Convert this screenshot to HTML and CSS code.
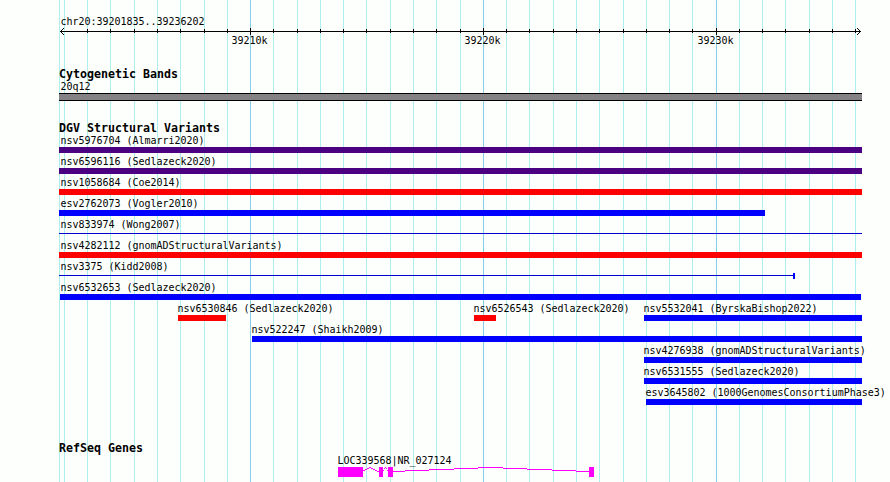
FILE: index.html
```html
<!DOCTYPE html>
<html lang="en">
<head>
<meta charset="utf-8">
<title>chr20:39201835..39236202</title>
<link rel="stylesheet" href="styles.css">
</head>
<body>
<main class="panel">
<svg class="gridlines" width="890" height="482" shape-rendering="crispEdges" aria-hidden="true">
<path class="minor" d="M59.5 0v482M64.5 0v482M87.5 0v482M110.5 0v482M134.5 0v482M157.5 0v482M180.5 0v482M204.5 0v482M227.5 0v482M273.5 0v482M297.5 0v482M320.5 0v482M343.5 0v482M366.5 0v482M390.5 0v482M413.5 0v482M436.5 0v482M460.5 0v482M506.5 0v482M529.5 0v482M553.5 0v482M576.5 0v482M599.5 0v482M623.5 0v482M646.5 0v482M669.5 0v482M692.5 0v482M739.5 0v482M762.5 0v482M785.5 0v482M809.5 0v482M832.5 0v482M855.5 0v482"/>
<path class="major" d="M250.5 0v482M483.5 0v482M716.5 0v482"/>
</svg>
<header class="ruler">
<div class="label region">chr20:39201835..39236202</div>
<svg class="axis" width="803" height="8" shape-rendering="crispEdges" aria-hidden="true">
<path d="M1 3.5h801M28.5 1v4M51.5 1v4M75.5 1v4M98.5 1v4M121.5 1v4M145.5 1v4M168.5 1v4M191.5 0v7M214.5 1v4M238.5 1v4M261.5 1v4M284.5 1v4M307.5 1v4M331.5 1v4M354.5 1v4M377.5 1v4M401.5 1v4M424.5 0v7M447.5 1v4M470.5 1v4M494.5 1v4M517.5 1v4M540.5 1v4M564.5 1v4M587.5 1v4M610.5 1v4M633.5 1v4M657.5 0v7M680.5 1v4M703.5 1v4M726.5 1v4M750.5 1v4M773.5 1v4M796.5 1v4"/>
<path d="M1 3.5h1M2 2.5h1M2 4.5h1M3 1.5h1M3 5.5h1M4 .5h1M4 6.5h1M801 3.5h1M800 2.5h1M800 4.5h1M799 1.5h1M799 5.5h1M798 .5h1M798 6.5h1"/>
</svg>
<div class="ticks"><span>39210k</span><span>39220k</span><span>39230k</span></div>
</header>
<section class="track bands">
<h2>Cytogenetic Bands</h2>
<div class="label band-label">20q12</div>
<div class="band"></div>
</section>
<section class="track variants">
<h2>DGV Structural Variants</h2>
<div class="row"><div class="feature gainloss" style="--x:0px;--w:803px"><span class="label">nsv5976704 (Almarri2020)</span></div></div>
<div class="row"><div class="feature gainloss" style="--x:0px;--w:803px"><span class="label">nsv6596116 (Sedlazeck2020)</span></div></div>
<div class="row"><div class="feature loss" style="--x:0px;--w:803px"><span class="label">nsv1058684 (Coe2014)</span></div></div>
<div class="row"><div class="feature gain" style="--x:0px;--w:706px"><span class="label">esv2762073 (Vogler2010)</span></div></div>
<div class="row"><div class="feature thin" style="--x:0px;--w:803px"><span class="label">nsv833974 (Wong2007)</span></div></div>
<div class="row"><div class="feature loss" style="--x:0px;--w:803px"><span class="label">nsv4282112 (gnomADStructuralVariants)</span></div></div>
<div class="row"><div class="feature thin capped" style="--x:0px;--w:736px"><span class="label">nsv3375 (Kidd2008)</span></div></div>
<div class="row"><div class="feature gain inset" style="--x:1px;--w:801px"><span class="label">nsv6532653 (Sedlazeck2020)</span></div></div>
<div class="row">
<div class="feature loss tight" style="--x:119px;--w:48px"><span class="label">nsv6530846 (Sedlazeck2020)</span></div>
<div class="feature loss tight" style="--x:415px;--w:22px"><span class="label">nsv6526543 (Sedlazeck2020)</span></div>
<div class="feature gain tight" style="--x:585px;--w:218px"><span class="label">nsv5532041 (ByrskaBishop2022)</span></div>
</div>
<div class="row"><div class="feature gain tight" style="--x:193px;--w:610px"><span class="label">nsv522247 (Shaikh2009)</span></div></div>
<div class="row"><div class="feature gain tight" style="--x:585px;--w:218px"><span class="label">nsv4276938 (gnomADStructuralVariants)</span></div></div>
<div class="row"><div class="feature gain tight" style="--x:585px;--w:218px"><span class="label">nsv6531555 (Sedlazeck2020)</span></div></div>
<div class="row"><div class="feature gain tight" style="--x:587px;--w:216px"><span class="label">esv3645802 (1000GenomesConsortiumPhase3)</span></div></div>
</section>
<section class="track genes">
<h2>RefSeq Genes</h2>
<div class="gene">
<div class="label">LOC339568|NR_027124</div>
<svg width="256" height="10" shape-rendering="crispEdges" aria-hidden="true">
<path class="exon" d="M0 0h25v10H0zM41 0h4v10h-4zM50 0h5v10h-5zM251 0h5v10h-5z"/>
<path class="intron" d="M25 3.5h2M27 2.5h2M29 1.5h2M31 .5h2M33 1.5h2M35 2.5h2M37 3.5h2M39 4.5h2M45 3.5h1M46 1.5h1M47 .5h1M48 1.5h1M49 3.5h1M55 4.5h12M67 3.5h24M91 2.5h25M116 1.5h24M140 .5h25M165 1.5h24M189 2.5h25M214 3.5h24M238 4.5h13"/>
</svg>
</div>
</section>
</main>
</body>
</html>
```

FILE: styles.css
```css
* { box-sizing: border-box; }
body { margin: 0; background: #fdfffc; color: #000; }
.panel {
  position: relative;
  isolation: isolate;
  width: 890px;
  height: 482px;
  padding: 16px 0 0 59px;
  overflow: hidden;
  font: 10px/12px "DejaVu Sans Mono", monospace;
}
.gridlines { position: absolute; inset: 0; z-index: -1; }
.gridlines path { fill: none; stroke-width: 1; }
.minor { stroke: #afeeee; }
.major { stroke: #87ceeb; }
.label { display: block; height: 12px; padding-left: 1.4px; white-space: pre; letter-spacing: -.02px; }
h2 {
  margin: 0;
  height: 12px;
  font-size: 11.63px;
  line-height: 12px;
  font-weight: bold;
  white-space: pre;
}
.ruler { height: 52px; }
.region { height: 12px; }
.axis { display: block; }
.axis path { fill: none; stroke: #000; }
.ticks { display: flex; gap: 197px; margin: -1px 0 0 172.4px; }
.ticks span { width: 36px; letter-spacing: -.02px; }
.bands { height: 54px; }
.band-label { height: 13px; line-height: 14px; }
.band { width: 803px; height: 8px; background: #848284; border: solid #000; border-width: 1px 0; }
.variants { height: 320px; }
.variants h2 { height: 11px; }
.row { display: grid; height: 21px; }
.feature {
  grid-area: 1 / 1;
  width: var(--w);
  height: 20px;
  padding-top: 2px;
  margin-left: var(--x);
  border-bottom: 6px solid;
}
.feature .label { color: #000; }
.inset .label { padding-left: .4px; }
.tight .label { padding-left: 0; margin-left: -.4px; }
.gainloss { border-color: #4b0082; }
.loss { border-color: #f00; }
.gain { border-color: #00f; }
.thin { height: 17px; border-bottom: 1px solid #0000cd; }
.capped { position: relative; }
.capped::after {
  content: "";
  position: absolute;
  right: 0;
  bottom: -4px;
  width: 2px;
  height: 6px;
  background: #00f;
}
.gene { margin-left: 279px; }
.gene .label { height: 13px; line-height: 14px; padding: 0; margin-left: -.4px; }
.gene svg { display: block; }
.exon { fill: #f0f; }
.intron { fill: none; stroke: #f0f; }
```
